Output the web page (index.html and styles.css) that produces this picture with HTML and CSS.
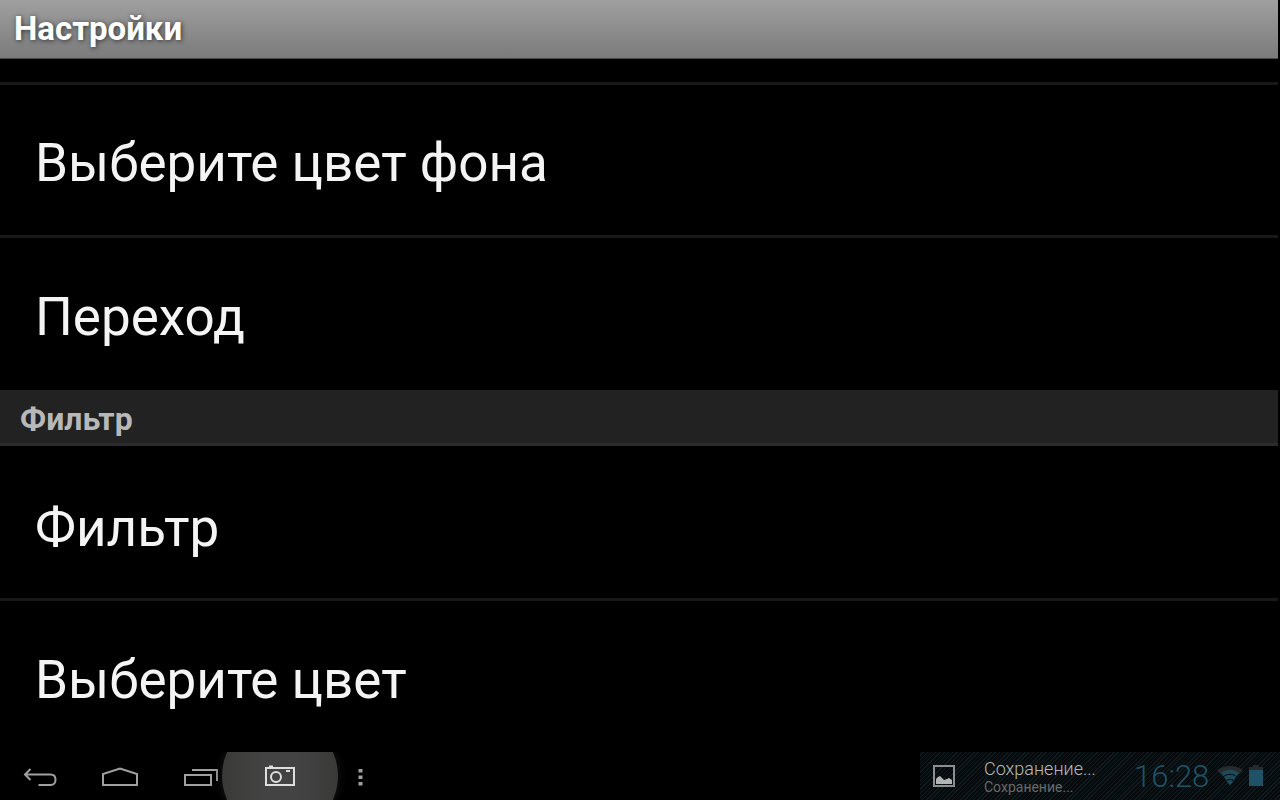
FILE: index.html
```html
<!DOCTYPE html>
<html lang="ru">
<head>
<meta charset="utf-8">
<title>Настройки</title>
<link rel="stylesheet" href="styles.css">
</head>
<body>
<div class="screen">
  <header class="title-bar"><h1 class="title">Настройки</h1></header>
  <main class="settings">
    <div class="previous"></div>
    <button class="item">Выберите цвет фона</button>
    <button class="item last">Переход</button>
    <h2 class="category">Фильтр</h2>
    <button class="item">Фильтр</button>
    <button class="item last">Выберите цвет</button>
  </main>
  <footer class="system-bar">
    <nav class="keys">
      <button class="key" aria-label="Назад">
        <svg width="80" height="48" fill="none" stroke="#a0a0a0" stroke-width="2"><path d="M30.500 17L25 22.500L30.500 28M25 22.500H50.500Q55.500 22.500 55.500 27.500Q55.500 33 50.500 33H38.500"/></svg>
      </button>
      <button class="key" aria-label="Домой">
        <svg width="80" height="48" fill="none" stroke="#a0a0a0" stroke-width="2"><path d="M23 33V22L40 16.500L57 22V33Z"/></svg>
      </button>
      <button class="key" aria-label="Недавние приложения">
        <svg width="80" height="48" fill="none" stroke="#a0a0a0" stroke-width="2"><path d="M25 23H51V33H25ZM32 18H57V29"/></svg>
      </button>
      <button class="key pressed" aria-label="Снимок экрана">
        <svg width="80" height="48" fill="none" stroke="#dedede" stroke-width="2"><path d="M26 16H54V33H26Z"/><circle cx="36" cy="25" r="5"/><path d="M29 14.500H33M46 19H50"/></svg>
      </button>
      <button class="key" aria-label="Меню">
        <svg width="80" height="48" fill="#a0a0a0"><path d="M38.500 17H42.500V20.500H38.500ZM38.500 23.500H42.500V27H38.500ZM38.500 30H42.500V33.500H38.500Z"/></svg>
      </button>
    </nav>
    <section class="status">
      <svg class="picture" width="24" height="24"><path d="M2 2H22V22H2Z" fill="none" stroke="#8e8e8e" stroke-width="2"/><path d="M4 20V15L6 13L8 12L10 14L12 16L15 15L17 14L20 16V20Z" fill="#b4b4b4"/></svg>
      <div class="notice">
        <div class="notice-title">Сохранение...</div>
        <div class="notice-text">Сохранение...</div>
      </div>
      <time class="clock">16:28</time>
      <svg class="signal" width="26" height="22"><path d="M0 5Q13 -3 26 5L22.500 9Q13 3 3.500 9Z" fill="#272b2c"/><g fill="none" stroke="#1c4b5c" stroke-width="4"><path d="M5 9.500Q13 4 21 9.500M8 13.500Q13 10 18 13.500"/></g><path d="M9.500 16Q13 14 16.500 16L13 20.500Z" fill="#1c4b5c"/></svg>
      <svg class="battery" width="14" height="22"><path d="M0 2H4V0H10V2H14V6H0Z" fill="#272b2c"/><path d="M0 5H14V21H0Z" fill="#1f5267"/></svg>
    </section>
  </footer>
</div>
</body>
</html>
```
FILE: styles.css
```css
* { box-sizing: border-box; }
body { margin: 0; background: #000; font-family: Roboto, "Noto Sans", sans-serif; }
button { border: 0; padding: 0; background: none; color: inherit; font: inherit; }
svg { display: block; flex: none; }
.screen { display: flex; flex-direction: column; min-height: 100vh; }
.title-bar {
  display: flex; align-items: center; height: 59px; margin-right: 2px; padding-left: 14px;
  background: linear-gradient(#9f9f9f, #7b7b7b); border-bottom: 1px solid #484848;
}
.title { margin: 0; font-size: 33px; line-height: 40px; font-weight: 700; color: #fff; text-shadow: 1px 1px 5px #333; }
.settings { flex: 1; display: flex; flex-direction: column; margin-right: 2px; }
.previous { height: 26px; border-bottom: 3px solid #181818; }
.item {
  height: 153px; padding: 6px 35px 0; text-align: left; color: #f4f4f4;
  font-size: 53px; line-height: 64px; border-bottom: 3px solid #181818;
}
.item.last { height: 152px; padding-top: 6px; border-bottom: 0; }
.category {
  display: flex; align-items: center; height: 56px; margin: 0; padding: 4px 20px 0;
  background: #222; border-bottom: 3px solid #2c2c2c;
  font-size: 32px; line-height: 40px; font-weight: 700; color: #b8b8b8;
}
.category + .item { height: 155px; padding-top: 12px; }
.category ~ .last { height: 151px; padding-top: 6px; }
.system-bar { display: flex; justify-content: space-between; height: 48px; background: #000; overflow: hidden; }
.keys { display: flex; }
.key { position: relative; width: 80px; height: 48px; }
.key svg { position: relative; }
.pressed::before {
  content: ""; position: absolute; left: -18px; top: -34px; width: 116px; height: 116px;
  border-radius: 50%; background: linear-gradient(90deg, #393a38, #434343 35%, #434343 65%, #393a38);
  box-shadow: 0 0 10px #161816;
}
.status {
  display: flex; align-items: center; width: 360px; padding-left: 12px;
  background: repeating-linear-gradient(135deg, #080b0d 0 2px, #0e1a1b 2px 3px);
}
.notice { width: 150px; margin-left: 28px; padding-top: 2px; white-space: nowrap; }
.notice-title { font-size: 18px; line-height: 20px; font-weight: 300; color: #b8b8b8; }
.notice-text { font-size: 14px; line-height: 16px; color: #686868; }
.clock { width: 83px; padding-top: 2px; font-size: 31px; line-height: 40px; font-weight: 300; color: #1f5267; }
.battery { margin-left: 6px; }
```
